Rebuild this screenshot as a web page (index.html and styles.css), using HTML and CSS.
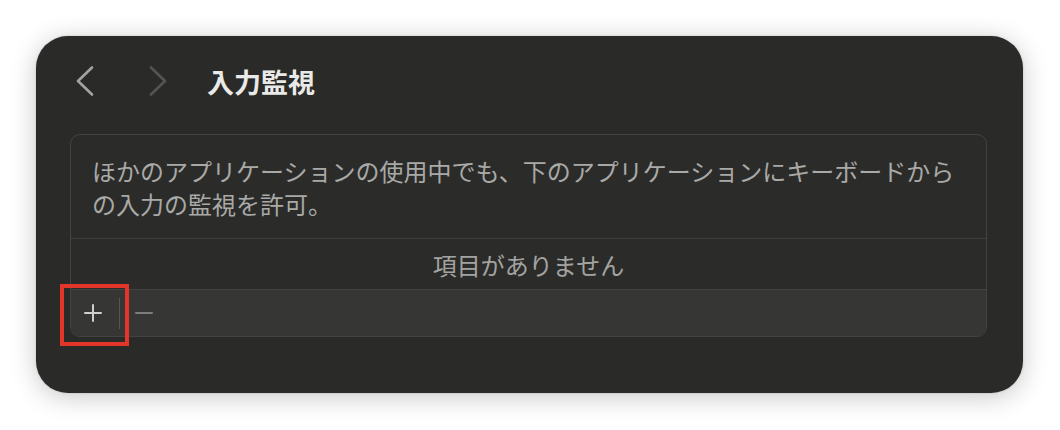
FILE: index.html
```html
<!DOCTYPE html>
<html lang="ja">
<head>
<meta charset="utf-8">
<title>入力監視</title>
<link rel="stylesheet" href="styles.css">
</head>
<body>
<div class="window">
  <header class="header">
    <svg class="chev chev-back" width="18" height="32" viewBox="0 0 18 32"><path d="M16 2.5 L2 16 L16 29.5" fill="none" stroke="#a3a3a1" stroke-width="2.6" stroke-linecap="round" stroke-linejoin="round"/></svg>
    <svg class="chev chev-fwd" width="18" height="32" viewBox="0 0 18 32"><path d="M2 2.5 L16 16 L2 29.5" fill="none" stroke="#545553" stroke-width="2.6" stroke-linecap="round" stroke-linejoin="round"/></svg>
    <h1 class="title">入力監視</h1>
  </header>
  <section class="panel">
    <p class="desc">ほかのアプリケーションの使用中でも、下のアプリケーションにキーボードからの入力の監視を許可。</p>
    <div class="empty">項目がありません</div>
    <div class="toolbar">
      <div class="tool-btn add">
        <svg width="18" height="18" viewBox="0 0 18 18"><path d="M9 1 V17 M1 9 H17" stroke="#cfcfcd" stroke-width="2" stroke-linecap="round"/></svg>
        <span class="highlight"></span>
      </div>
      <span class="sep"></span>
      <div class="tool-btn remove">
        <svg width="18" height="18" viewBox="0 0 18 18"><path d="M1 9 H17" stroke="#7d7e7c" stroke-width="2" stroke-linecap="round"/></svg>
      </div>
    </div>
  </section>
</div>
</body>
</html>
```
FILE: styles.css
```css
* { box-sizing: border-box; }
html, body { margin: 0; padding: 0; }
body {
  background: #ffffff;
  width: 1060px;
  height: 430px;
  overflow: hidden;
  font-family: "Noto Sans CJK JP", "Noto Sans", sans-serif;
}
.window {
  margin: 36px 0 0 36px;
  width: 987px;
  height: 357px;
  background: #2a2b29;
  border-radius: 32px;
  box-shadow: 0 4px 26px rgba(0, 0, 0, 0.22), 0 0 2px rgba(0, 0, 0, 0.2);
  padding: 0 36px 0 34px;
  display: flex;
  flex-direction: column;
}
.header {
  height: 90px;
  display: flex;
  align-items: center;
  padding-left: 6px;
  flex-shrink: 0;
}
.chev { display: block; margin-top: -1px; }
.chev-fwd { margin-left: 55px; }
.title {
  margin: 0 0 0 40px;
  font-size: 27px;
  font-weight: 700;
  color: #e9e9e7;
  line-height: 1;
}
.panel {
  margin-top: 8px;
  border: 1px solid #434442;
  border-radius: 10px;
  background: #2b2c2a;
  overflow: visible;
  display: flex;
  flex-direction: column;
}
.desc {
  margin: 0;
  padding: 19px 21px 18px 21px;
  font-size: 24px;
  line-height: 33px;
  color: #a9a9a7;
  border-bottom: 1px solid #3d3e3c;
}
.empty {
  height: 51px;
  display: flex;
  align-items: center;
  justify-content: center;
  font-size: 24px;
  color: #a3a3a1;
  border-bottom: 1px solid #434442;
}
.toolbar {
  height: 46px;
  background: #363735;
  border-radius: 0 0 9px 9px;
  display: flex;
  align-items: center;
}
.tool-btn {
  height: 46px;
  display: flex;
  align-items: center;
  justify-content: center;
  position: relative;
}
.add { width: 44px; }
.remove { width: 48px; }
.sep {
  width: 1px;
  height: 31px;
  margin-left: 4px;
  background: #565755;
}
.highlight {
  position: absolute;
  left: -11px;
  top: -6px;
  width: 69px;
  height: 62px;
  border: 4px solid #e4352a;
}
```
